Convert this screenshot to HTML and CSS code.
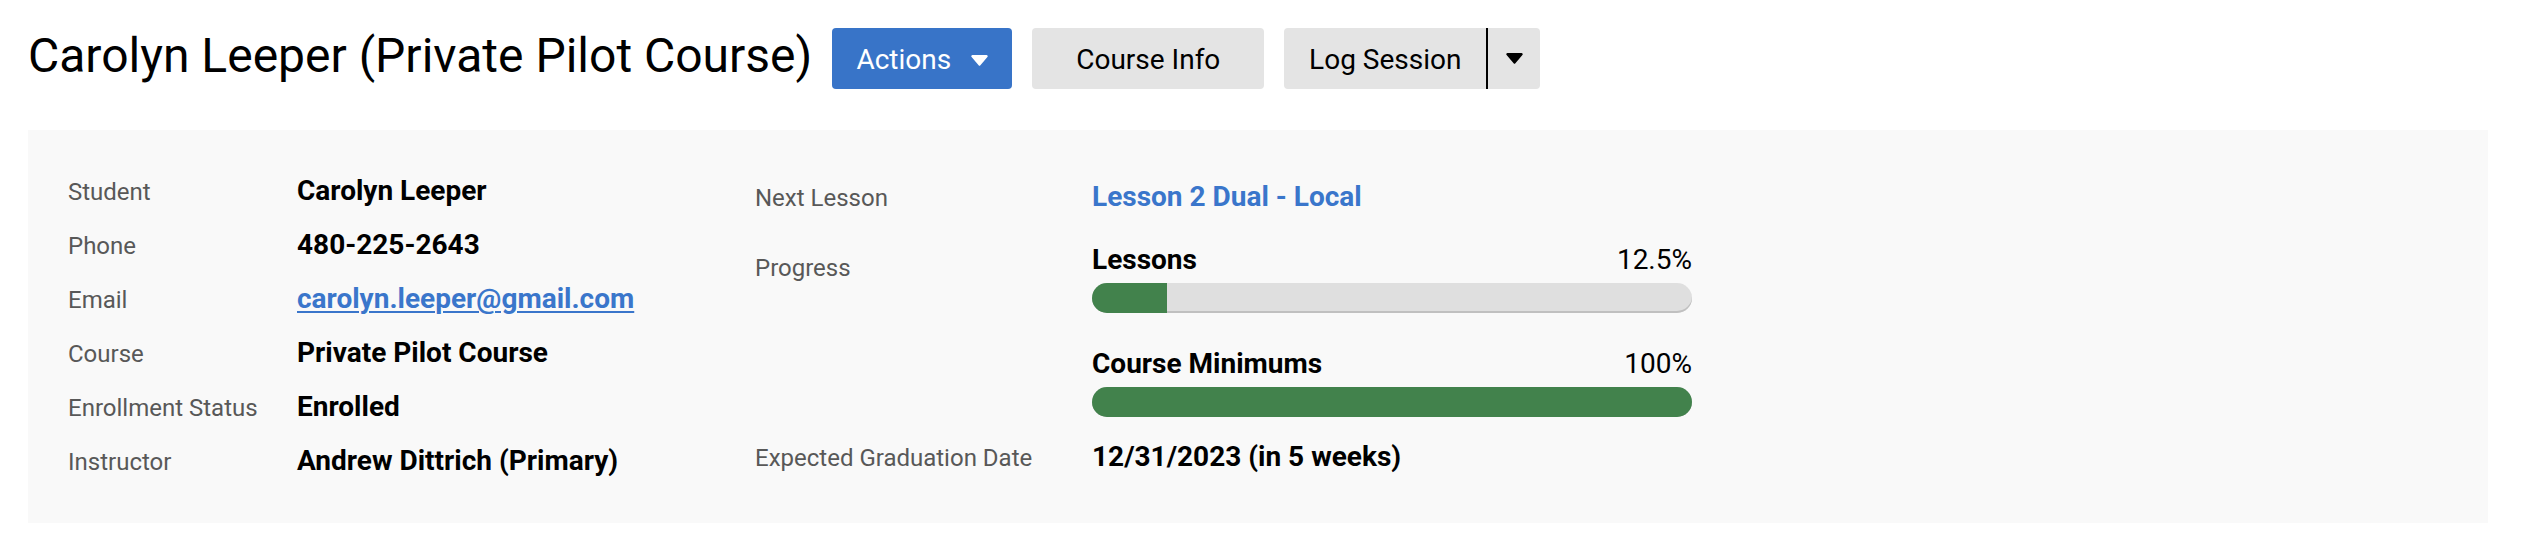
FILE: index.html
```html
<!DOCTYPE html>
<html lang="en">
<head>
  <meta charset="UTF-8">
  <title>Carolyn Leeper (Private Pilot Course)</title>
  <link rel="stylesheet" href="styles.css">
</head>
<body>

<div class="page">
  <div class="header">
    <h1 class="title">Carolyn Leeper (Private Pilot Course)</h1>
    <button class="btn btn-primary">Actions
      <svg class="caret" viewBox="0 0 17 11"><path d="M1.5 0h14a1.2 1.2 0 0 1 .9 2L9.4 10.3a1.2 1.2 0 0 1-1.8 0L.6 2A1.2 1.2 0 0 1 1.5 0z" fill="#fff"/></svg>
    </button>
    <button class="btn btn-default course-info">Course Info</button>
    <div class="split">
      <button class="btn btn-default split-main">Log Session</button>
      <button class="btn btn-default split-toggle">
        <svg class="caret" viewBox="0 0 17 11"><path d="M1.5 0h14a1.2 1.2 0 0 1 .9 2L9.4 10.3a1.2 1.2 0 0 1-1.8 0L.6 2A1.2 1.2 0 0 1 1.5 0z" fill="#000"/></svg>
      </button>
    </div>
  </div>

  <div class="panel">
    <div class="details">
      <div class="label">Student</div><div class="value">Carolyn Leeper</div>
      <div class="label">Phone</div><div class="value">480-225-2643</div>
      <div class="label">Email</div><div class="value"><a href="#">carolyn.leeper@gmail.com</a></div>
      <div class="label">Course</div><div class="value">Private Pilot Course</div>
      <div class="label">Enrollment Status</div><div class="value">Enrolled</div>
      <div class="label">Instructor</div><div class="value">Andrew Dittrich (Primary)</div>
    </div>

    <div class="summary">
      <div class="row">
        <div class="label">Next Lesson</div>
        <div class="value"><a href="#" class="plain">Lesson 2 Dual - Local</a></div>
      </div>
      <div class="row progress-row">
        <div class="label">Progress</div>
        <div class="progress">
          <div class="bar-head"><span class="bar-name">Lessons</span><span>12.5%</span></div>
          <div class="bar"><div class="fill" style="width: 12.5%"></div></div>
          <div class="bar-head second"><span class="bar-name">Course Minimums</span><span>100%</span></div>
          <div class="bar"><div class="fill full" style="width: 100%"></div></div>
        </div>
      </div>
      <div class="row last">
        <div class="label">Expected Graduation Date</div>
        <div class="value">12/31/2023 (in 5 weeks)</div>
      </div>
    </div>
  </div>
</div>

</body>
</html>
```

FILE: styles.css
```css
body {
  margin: 0;
  background: #fff;
  font-family: Roboto, "Liberation Sans", sans-serif;
  color: #000;
}
.page {
  padding: 28px 34px 0 28px;
}
.header {
  display: flex;
  align-items: flex-start;
  gap: 20px;
}
.title {
  margin: 0;
  font-size: 48px;
  font-weight: 400;
  line-height: 56px;
  white-space: nowrap;
}
.btn {
  height: 61px;
  border: none;
  border-radius: 4px;
  font-family: Roboto, "Liberation Sans", sans-serif;
  font-size: 28px;
  line-height: 32px;
  padding: 3px 25px 0;
  cursor: pointer;
  display: flex;
  align-items: center;
}
.btn-primary {
  width: 180px;
  padding: 3px 0 0;
  justify-content: center;
  background-color: #3874c8;
  color: #fff;
  gap: 20px;
}
.btn-default {
  background-color: #e4e4e4;
  color: #000;
}
.course-info {
  width: 232px;
  justify-content: center;
}
.caret {
  width: 17px;
  height: 11px;
  display: block;
}
.split {
  display: flex;
}
.split-main {
  width: 202px;
  justify-content: center;
  border-radius: 4px 0 0 4px;
  padding: 3px 0 0 0;
}
.split-toggle {
  width: 54px;
  border-left: 2px solid #000;
  border-radius: 0 4px 4px 0;
  padding: 0;
  justify-content: center;
}
.panel {
  margin-top: 41px;
  background-color: #f9f9f9;
  padding: 34px 40px 35px;
  display: flex;
}
.details {
  width: 687px;
  display: grid;
  grid-template-columns: 229px auto;
  grid-auto-rows: 54px;
  align-items: baseline;
  line-height: 54px;
}
.label {
  font-size: 24px;
  color: #585858;
}
.value {
  font-size: 28px;
  font-weight: 700;
}
.value a {
  color: #3a76cb;
  text-decoration: underline;
  text-decoration-thickness: 2px;
  text-underline-offset: 3px;
}
.value a.plain {
  text-decoration: none;
}
.summary {
  padding-top: 6px;
}
.row {
  display: flex;
  align-items: baseline;
  line-height: 54px;
}
.row .label {
  width: 337px;
}
.progress-row {
  align-items: flex-start;
  margin-top: 18px;
  line-height: 34px;
}
.progress-row .label {
  padding-top: 8px;
}
.progress {
  width: 600px;
}
.bar-head {
  display: flex;
  justify-content: space-between;
  font-size: 28px;
  line-height: 34px;
}
.bar-head.second {
  margin-top: 34px;
}
.bar-name {
  font-weight: 700;
}
.bar {
  margin-top: 6px;
  height: 30px;
  border-radius: 15px;
  background-color: #dfdfdf;
  box-shadow: inset 0 -2px 0 #c0c0c0;
  overflow: hidden;
}
.fill {
  height: 100%;
  background-color: #42824c;
}
.row.last {
  margin-top: 13px;
}
```
